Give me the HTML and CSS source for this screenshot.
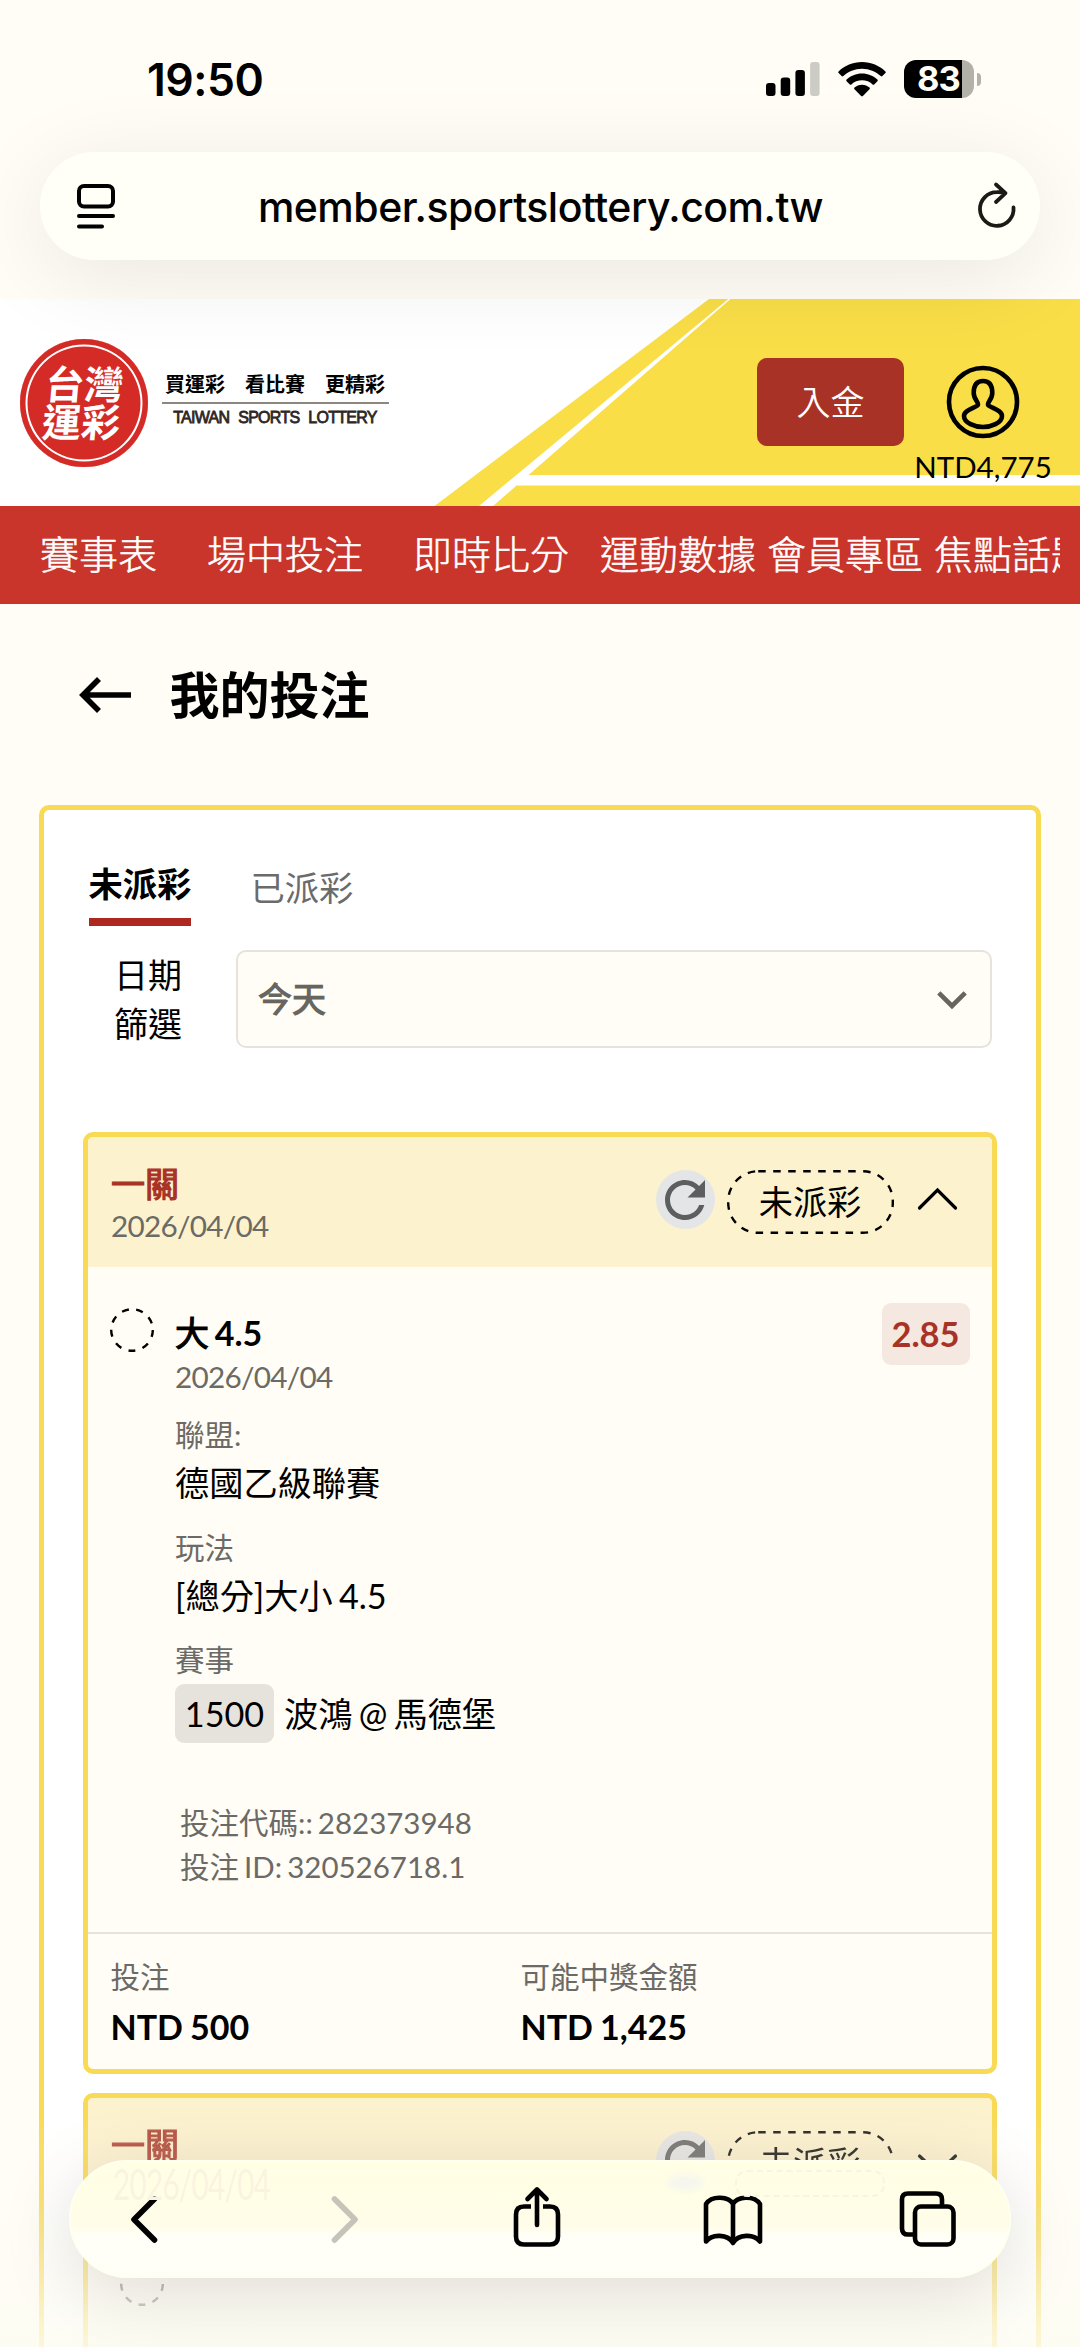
FILE: index.html
```html
<!DOCTYPE html>
<html lang="zh-Hant">
<head>
<meta charset="utf-8">
<title>我的投注 - 台灣運彩</title>
<link rel="stylesheet" href="styles.css">
</head>
<body>
<div class="screen">
  <div class="browser-top">
    <div class="status-bar">
      <span class="time">19:50</span>
      <div class="status-icons">
        <svg class="signal" width="54" height="35" viewBox="0 0 54 35"><rect x="0" y="21" width="9.5" height="13" rx="3"/><rect x="14.7" y="15.5" width="9.5" height="18.5" rx="3"/><rect x="29.4" y="8" width="9.5" height="26" rx="3"/><rect x="44.1" y="0" width="9.5" height="34" rx="3" fill="#cccbc4"/></svg>
        <svg class="wifi" width="48" height="35" viewBox="0 0 48 35"><path d="M24 0C14.800 0 6.500 3.600.6 9.400c-.5.500-.5 1.200 0 1.700l3 3c.5.500 1.200.5 1.700 0C10.200 9.500 16.700 6.700 24 6.700s13.800 2.800 18.700 7.400c.5.500 1.200.5 1.700 0l3-3c.5-.5.5-1.200 0-1.700C41.500 3.600 33.200 0 24 0z"/><path d="M24 11.400c-6 0-11.400 2.300-15.400 6.100-.5.500-.5 1.200 0 1.700l3.200 3.200c.5.500 1.100.5 1.600 0 2.800-2.600 6.500-4.100 10.600-4.100s7.800 1.500 10.600 4.100c.5.500 1.100.5 1.600 0l3.200-3.200c.5-.5.5-1.200 0-1.700C35.400 13.700 30 11.400 24 11.400z"/><path d="M24 22.800c-2.900 0-5.500 1.100-7.500 2.800-.5.500-.5 1.200 0 1.700l6.600 6.600c.5.500 1.300.5 1.800 0l6.600-6.600c.5-.5.5-1.200 0-1.700-2-1.700-4.600-2.800-7.500-2.800z"/></svg>
        <div class="battery"><span class="battery-level">83</span></div>
        <i class="battery-nub"></i>
      </div>
    </div>
    <div class="address-bar">
      <svg width="38" height="46" viewBox="0 0 38 46" fill="none" stroke="#000" stroke-width="4" stroke-linecap="round"><rect x="2" y="2" width="34" height="20.500" rx="5"/><path d="M2 32h34M2 42.500h23"/></svg>
      <span class="url">member.sportslottery.com.tw</span>
      <svg class="reload" width="38" height="46" viewBox="0 0 38 46" fill="none" stroke="#1a1a16" stroke-width="3.800" stroke-linecap="round" stroke-linejoin="round"><path d="M36.500 23.500A16.800 16.800 0 1 1 19.700 8.200Q24 8 28 9M19 .5L28.500 9.200 19 18"/></svg>
    </div>
  </div>

  <header class="site-header">
    <svg class="header-art" width="1080" height="207" viewBox="0 0 1080 207"><path d="M709 0H1080V207H434.500z" fill="#f9de48"/><path d="M728.300 0h2.200L528.500 176H1080v10.500H516.500L493 207h-14z" fill="#fff"/></svg>
    <div class="brand">
      <div class="seal"><div class="seal-text"><span>台灣</span><span>運彩</span></div></div>
      <div class="slogan">
        <span class="slogan-zh">買運彩　看比賽　更精彩</span>
        <span class="slogan-en">TAIWAN SPORTS LOTTERY</span>
      </div>
    </div>
    <button class="deposit">入金</button>
    <div class="account">
      <svg width="74" height="74" viewBox="0 0 74 74" fill="none" stroke="#000" stroke-width="4.600"><circle cx="37" cy="37" r="34"/><path d="M31.500 40.500c2.800-2-3.800-5.500-3.800-12.500 0-7.500 2.800-12 9.300-12s9.300 4.500 9.300 12c0 7-6.600 10.500-3.800 12.500 4.500 3.200 13.500 5 13.500 10.500 0 7-11 11-19 11s-19-4-19-11c0-5.500 9-7.300 13.500-10.500z"/></svg>
      <span class="balance">NTD4,775</span>
    </div>
  </header>

  <nav class="main-nav">
    <div class="nav-track">
      <a class="wide">賽事表</a><a class="wide">場中投注</a><a class="mid">即時比分</a><a>運動數據</a><a>會員專區</a><a>焦點話題</a>
    </div>
  </nav>

  <div class="page-title">
    <svg width="52" height="36" viewBox="0 0 52 36" fill="none" stroke="#000" stroke-width="5.600"><path d="M20 2L4 18l16 16M4 18h48"/></svg>
    <h1>我的投注</h1>
  </div>

  <main class="panel">
    <div class="tabs"><span class="tab active">未派彩</span><span class="tab">已派彩</span></div>
    <div class="filter">
      <label>日期<br>篩選</label>
      <div class="select"><span>今天</span><svg width="30" height="18" viewBox="0 0 30 18" fill="none" stroke="#66655f" stroke-width="4.600"><path d="M1.800 1.800L15 15 28.200 1.800"/></svg></div>
    </div>

    <article class="bet">
      <div class="bet-head">
        <div><div class="legs">一關</div><div class="date">2026/04/04</div></div>
        <div class="actions">
          <div class="refresh"><svg width="40" height="40" viewBox="4 4 16 16"><path fill="#5d5e60" d="M17.650 6.350C16.200 4.900 14.210 4 12 4c-4.420 0-7.990 3.580-7.990 8s3.570 8 7.990 8c3.730 0 6.840-2.550 7.730-6h-2.080c-.82 2.330-3.040 4-5.650 4-3.310 0-6-2.690-6-6s2.690-6 6-6c1.660 0 3.140.69 4.220 1.780L13 11h7V4l-2.350 2.350z"/></svg></div>
          <div class="status"><svg width="167" height="64" viewBox="0 0 167 64"><rect x="1.200" y="1.200" width="164.600" height="61.600" rx="30"/></svg><span>未派彩</span></div>
          <svg class="chev" width="39" height="22" viewBox="0 0 39 22"><path d="M1.500 20L19.500 2l18 18"/></svg>
        </div>
      </div>
      <div class="bet-body">
        <svg class="pending" width="44" height="44" viewBox="0 0 44 44"><circle cx="22" cy="22" r="20.800"/></svg>
        <div class="detail">
          <div class="pick"><span class="side">大</span> 4.5</div>
          <div class="date">2026/04/04</div>
          <div class="label">聯盟:</div>
          <div class="value">德國乙級聯賽</div>
          <div class="label">玩法</div>
          <div class="value">[總分]大小 4.5</div>
          <div class="label">賽事</div>
          <div class="match"><span class="code">1500</span><span>波鴻 @ 馬德堡</span></div>
          <div class="ids"><div>投注代碼:: 282373948</div><div>投注 ID: 320526718.1</div></div>
        </div>
        <div class="odds">2.85</div>
      </div>
      <div class="bet-foot">
        <div><div class="foot-label">投注</div><div class="amount">NTD 500</div></div>
        <div><div class="foot-label">可能中獎金額</div><div class="amount">NTD 1,425</div></div>
      </div>
    </article>

    <article class="bet next">
      <div class="bet-head">
        <div><div class="legs">一關</div></div>
        <div class="actions">
          <div class="refresh"><svg width="40" height="40" viewBox="4 4 16 16"><path fill="#5d5e60" d="M17.650 6.350C16.200 4.900 14.210 4 12 4c-4.420 0-7.990 3.580-7.990 8s3.570 8 7.990 8c3.730 0 6.840-2.550 7.730-6h-2.080c-.82 2.330-3.040 4-5.650 4-3.310 0-6-2.690-6-6s2.690-6 6-6c1.660 0 3.140.69 4.220 1.780L13 11h7V4l-2.350 2.350z"/></svg></div>
          <div class="status"><svg width="167" height="64" viewBox="0 0 167 64"><rect x="1.200" y="1.200" width="164.600" height="61.600" rx="30"/></svg><span>未派彩</span></div>
          <svg class="chev" width="39" height="22" viewBox="0 0 39 22"><path d="M1.500 8l18 17 18-17"/></svg>
        </div>
      </div>
      <div class="bet-body">
        <svg class="pending" width="44" height="44" viewBox="0 0 44 44"><circle cx="22" cy="22" r="20.800"/></svg>
      </div>
    </article>
  </main>

  <div class="bottom-fade"></div>
  <div class="toolbar">
    <span class="ghost-date">2026/04/04</span><i class="ghost-dot"></i><i class="ghost-pill"></i>
    <svg width="62" height="62" viewBox="0 0 62 62"><path d="M38.500 11L18 31.500 38.500 52"/></svg>
    <svg class="disabled" width="62" height="62" viewBox="0 0 62 62"><path d="M23.500 11L44 31.500 23.500 52"/></svg>
    <svg width="62" height="62" viewBox="1 2 62 62"><path d="M25 20.500h-7q-8 0-8 8v22q0 8 8 8h26q8 0 8-8v-22q0-8-8-8h-7" stroke-linecap="butt"/><path d="M31 39V4M21.500 13L31 3.500l9.500 9.500"/></svg>
    <svg width="62" height="62" viewBox="0 2 62 62"><path d="M31 18C27 10.500 10 9 4 18v37.500c6-8 22-7.500 27 1.500 5-9 21-9.500 27-1.500V18C52 9 35 10.500 31 18zV57"/></svg>
    <svg width="62" height="62" viewBox="0 2 62 62"><path d="M16 48.500h-5q-6 0-6-6v-29q0-6 6-6h28q6 0 6 6v6"/><rect x="18" y="20.500" width="38.500" height="38" rx="6"/></svg>
  </div>
</div>
</body>
</html>
```
FILE: styles.css
```css
* { box-sizing: border-box; }
body { margin: 0; background: #fffdf5; }
svg { display: block; flex: none; overflow: visible; }

.screen {
  position: relative;
  width: 1080px;
  height: 2347px;
  overflow: hidden;
  background: #fffdf5;
  font-family: Lato, "Noto Sans CJK TC", sans-serif;
  color: #000;
}

/* Browser chrome */
.browser-top { height: 299px; padding: 56px 40px 0; }
.status-bar {
  display: flex;
  justify-content: space-between;
  height: 96px;
  padding: 0 59px 0 107px;
}
.time { font: 600 44.500px/48px Inter, sans-serif; letter-spacing: -0.5px; }
.status-icons { display: flex; align-items: center; height: 46px; }
.wifi { margin: 0 18px; }
.battery {
  width: 70px;
  height: 38px;
  border-radius: 12px;
  background: linear-gradient(90deg, #000 58px, #b3b2aa 58px);
}
.battery-level {
  display: block;
  padding-left: 13px;
  color: #fffdf5;
  font: 700 34.500px/38px Inter, sans-serif;
  letter-spacing: -1px;
}
.battery-nub {
  width: 4px;
  height: 13px;
  margin-left: 3px;
  border-radius: 0 5px 5px 0;
  background: #b3b2aa;
}
.address-bar {
  position: relative;
  z-index: 3;
  display: flex;
  align-items: center;
  justify-content: space-between;
  height: 108px;
  padding: 2px 25px 0 37px;
  border-radius: 54px;
  background: #fffff8;
  box-shadow: 0 16px 90px rgba(0, 0, 0, 0.09);
}
.url {
  margin-right: 11px;
  font: 500 41px/50px Inter, sans-serif;
  letter-spacing: -0.500px;
}

/* Site header */
.site-header {
  position: relative;
  display: flex;
  align-items: flex-start;
  height: 207px;
  background: #fff;
}
.header-art { position: absolute; inset: 0; }
.brand { position: relative; display: flex; width: 757px; padding: 40px 0 0 19.5px; }
.seal {
  display: flex;
  align-items: center;
  justify-content: center;
  width: 128px;
  height: 128px;
  border-radius: 50%;
  background: #d42b26;
  box-shadow: inset 0 0 0 5.500px #d42b26, inset 0 0 0 7.500px #fff;
}
.seal-text {
  display: flex;
  flex-direction: column;
  color: #fff;
  font-size: 39px;
  font-weight: 700;
  line-height: 38px;
  transform: skewX(-5deg);
}
.slogan { width: 227px; margin: 35px 0 0 14px; text-align: center; white-space: nowrap; }
.slogan-zh {
  display: block;
  height: 30px;
  border-bottom: 2px solid #8f8680;
  font-size: 20px;
  font-weight: 700;
  line-height: 20px;
}
.slogan-en {
  display: block;
  margin-top: 4px;
  color: #2f2624;
  font: 400 16px/20px "Liberation Sans", sans-serif;
  letter-spacing: -0.700px;
  word-spacing: 5px;
  -webkit-text-stroke: 0.800px #2f2624;
}
.deposit {
  position: relative;
  width: 147px;
  height: 88px;
  margin-top: 59px;
  border: 0;
  border-radius: 10px;
  background: #a83226;
  color: #fff;
  font: 350 34px/40px Lato, "Noto Sans CJK TC", sans-serif;
}
.account {
  position: relative;
  display: flex;
  flex-direction: column;
  align-items: center;
  width: 140px;
  margin: 66px 0 0 9px;
}
.balance { margin-top: 10px; font-size: 29.500px; line-height: 36px; }

.main-nav { height: 98px; padding: 0 20px 0 40px; background: #c9342b; }
.nav-track { display: flex; gap: 11px; overflow: hidden; white-space: nowrap; }
.nav-track a {
  color: #fff;
  font-size: 39px;
  font-weight: 300;
  line-height: 97px;
  -webkit-text-stroke: 0.500px #fff;
}
.nav-track .wide { margin-right: 39px; }
.nav-track .mid { margin-right: 20px; }

/* Title */
.page-title { display: flex; gap: 38.500px; height: 201px; padding: 61px 0 0 79px; }
.page-title svg { margin-top: 12px; }
.page-title h1 { margin: 0; font-size: 50px; font-weight: 700; line-height: 60px; }

/* Panel */
.panel {
  height: 1700px;
  margin: 0 39px;
  padding: 50px 39px 0;
  border: 5px solid #f9da55;
  border-radius: 10px;
  background: #fff;
}
.tabs { display: flex; gap: 59px; height: 66px; padding-left: 5.500px; }
.tab { padding-top: 4px; color: #6b6b6b; font-size: 34.300px; line-height: 48px; }
.tab.active { padding-top: 0; border-bottom: 8px solid #ae2720; color: #000; font-weight: 700; }
.filter {
  display: flex;
  justify-content: space-between;
  margin: 24px 5px 84px 31px;
  font-size: 34px;
  line-height: 49px;
}
.select {
  display: flex;
  align-items: center;
  justify-content: space-between;
  width: 756px;
  height: 98px;
  padding: 0 23px 2px 20px;
  border: 2px solid #e6e2dc;
  border-radius: 10px;
  background: #fffdf5;
  color: #66655f;
  -webkit-text-stroke: 1.100px #66655f;
}
.select svg { margin-top: 4px; }

/* Bet card */
.bet {
  border: 5px solid #f9da55;
  border-radius: 10px;
  background: #fffdf5;
  overflow: hidden;
  word-spacing: -2.500px;
}
.bet-head {
  display: flex;
  justify-content: space-between;
  height: 130px;
  padding: 24px 35px 0 23px;
  background: #fdf2ce;
}
.legs { color: #a83226; font-size: 34px; line-height: 45px; -webkit-text-stroke: 1.200px #a83226; }
.date { color: #6b6a64; font-size: 29.700px; line-height: 40px; letter-spacing: -0.700px; }
.actions { display: flex; align-items: center; height: 64px; margin-top: 9px; }
.refresh {
  display: flex;
  align-items: center;
  justify-content: center;
  width: 59px;
  height: 59px;
  margin: -5px 12px 0 0;
  border-radius: 50%;
  background: #e4e5e7;
}
.status { position: relative; width: 167px; height: 64px; }
.status svg { position: absolute; inset: 0; }
.status rect { fill: none; stroke: #000; stroke-width: 2.400; stroke-dasharray: 7.500 7.500; }
.status span { display: block; font-size: 34.200px; line-height: 64px; text-align: center; }
.chev { margin: -7px 0 0 24.500px; fill: none; stroke: #000; stroke-width: 3.200; stroke-linecap: round; }
.bet-body { display: flex; padding: 36px 22.500px 42px; }
.pending { margin: 5px 21px 0 -0.500px; fill: none; stroke: #000; stroke-width: 2.400; stroke-dasharray: 7 7.520; }
.detail { flex: 1; padding-top: 6px; }
.pick { font-size: 34px; font-weight: 700; line-height: 48px; }
.pick .side { font-weight: 400; -webkit-text-stroke: 1.100px #000; }
.label { margin: 20.500px 0 4px; color: #6b6a66; font-size: 29.500px; line-height: 40px; }
.date + .label { margin-top: 18px; }
.value { font-size: 34.200px; line-height: 48px; }
.match { display: flex; gap: 10px; font-size: 34.200px; line-height: 59px; }
.code { width: 99px; border-radius: 9px; background: #e6e2dc; text-align: center; }
.ids { margin: 58px 0 0.500px 5px; color: #6b6a66; font-size: 29.500px; line-height: 44px; }
.odds {
  width: 88px;
  height: 62px;
  border-radius: 9px;
  background: #f5e8e0;
  color: #a83226;
  font-size: 34.500px;
  font-weight: 700;
  line-height: 62px;
  text-align: center;
}
.bet-foot {
  display: grid;
  grid-template-columns: 410px 1fr;
  padding: 23.500px 22.500px 18px;
  border-top: 2px solid #e6e2dc;
}
.foot-label { color: #6b6a66; font-size: 29.500px; line-height: 40px; }
.amount { margin-top: 5.500px; font-size: 34px; font-weight: 700; line-height: 48px; word-spacing: -1.200px; }
.next { height: 400px; margin-top: 19px; }
.next .legs, .next .actions { opacity: 0.85; }
.next .pending { margin: -2px 0 0 9px; opacity: 0.6; }

/* Bottom toolbar */
.bottom-fade {
  position: absolute;
  left: 0;
  right: 0;
  bottom: 0;
  height: 226px;
  background: linear-gradient(rgba(255, 253, 245, 0.05), rgba(255, 253, 245, 0.2) 35%, rgba(253, 252, 243, 0.85));
}
.toolbar {
  position: absolute;
  left: 69px;
  right: 69px;
  bottom: 69px;
  display: flex;
  align-items: center;
  justify-content: space-between;
  height: 118px;
  padding: 0 50px 0 45px;
  border: 2px solid #ffffef;
  border-radius: 59px;
  background: linear-gradient(#ffffe4, #fffde8 56%, #fffff7 64%);
  box-shadow: 0 14px 75px rgba(0, 0, 0, 0.13);
}
.toolbar svg { fill: none; stroke: #000; stroke-width: 4.600; stroke-linecap: round; stroke-linejoin: round; }
.toolbar svg:nth-of-type(-n+2) { stroke-width: 5.600; }
.toolbar .disabled { stroke: #c5c3ba; }
.ghost-date {
  position: absolute;
  left: 42px;
  top: 10px;
  color: #f9f3df;
  font-size: 29.700px;
  line-height: 26px;
  letter-spacing: -0.750px;
  transform: scaleY(1.4);
}
.ghost-dot {
  position: absolute;
  left: 596px;
  top: 12px;
  width: 36px;
  height: 17px;
  border-radius: 50%;
  background: #f7f6ee;
  filter: blur(3px);
}
.ghost-pill {
  position: absolute;
  left: 664px;
  top: 8px;
  width: 150px;
  height: 27px;
  border: 2px dashed #f9f3df;
  border-radius: 12px;
}
```
